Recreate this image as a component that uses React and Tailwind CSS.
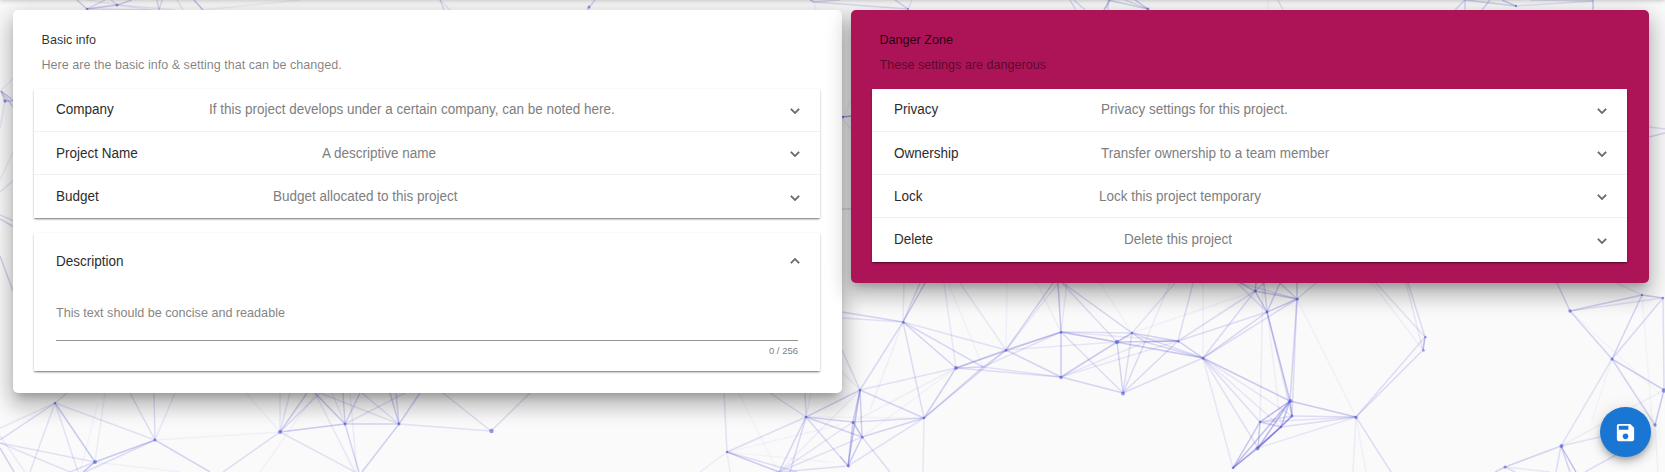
const LINES = [
  // top strip
  [77,0,87,9,.45],[87,9,117,5,.5],[87,9,105,0,.3],[117,5,132,0,.45],[117,5,111,0,.3],[87,9,155,10,.25],[117,5,175,10,.2],[157,0,159,10,.35],[162,0,159,10,.3],[177,0,183,10,.2],[194,0,203,10,.6],[203,10,300,0,.12],[87,0,150,10,.15],
  [440,0,444,10,.3],[440,0,450,10,.2],[595,0,587,10,.4],[810,0,814,2,.6],[814,2,908,9,.3],[814,2,840,0,.3],[814,2,816,10,.1],[895,0,908,9,.4],[912,0,908,9,.2],
  [1070,0,1076,10,.3],[1074,0,1085,10,.35],[1110,0,1104,10,.6],[1108,0,1108,10,.3],[1108,0,1148,9,.4],[1135,0,1148,9,.5],[1125,0,1148,9,.3],[1268,0,1268,10,.1],[1278,0,1283,10,.25],
  [1465,0,1455,10,.35],[1465,0,1465,10,.35],[1465,0,1516,6,.4],[1490,0,1482,10,.4],[1502,0,1516,6,.5],[1516,6,1593,1,.25],[1593,0,1593,10,.5],[1530,0,1593,1,.25],
  // left strip
  [1,91,14,101,.5],[5,101,14,101,.5],[1,91,5,101,.5],[1,91,14,108,.4],[0,91,14,78,.15],[5,101,0,128,.2],[0,192,14,180,.25],[14,150,0,180,.15],[0,215,14,221,.3],[0,219,14,227,.4],[0,256,13,291,.4],
  // between the panels
  [842,117,852,116,.9],[842,119,852,130,.15],[842,209,852,209,.35],[852,97,843,119,.1],
  // bottom left
  [55,403,0,428,.2],[55,403,0,440,.35],[55,403,67,393,.3],[55,403,95,462,.5],[55,403,155,440,.25],[55,403,30,472,.25],[55,403,78,472,.25],[105,393,95,462,.15],[98,403,80,472,.08],
  [95,462,155,440,.5],[155,440,85,472,.3],[95,462,83,472,.6],[95,462,70,472,.3],[95,462,0,443,.25],[0,443,70,472,.25],[0,448,14,472,.4],[95,462,180,472,.1],[0,436,25,472,.15],
  [155,440,130,393,.3],[155,440,154,393,.3],[155,440,175,393,.2],[155,440,210,472,.4],[155,440,280,432,.1],
  [280,432,223,472,.3],[280,432,345,424,.5],[280,432,307,393,.45],[280,432,280,393,.2],[280,432,290,393,.25],[280,432,320,393,.3],[280,432,355,472,.25],[280,432,246,393,.1],
  [345,424,315,393,.5],[345,424,343,393,.4],[345,424,360,393,.4],[345,424,399,424,.4],[345,424,405,393,.25],[345,424,359,472,.4],[345,424,332,393,.2],
  [399,424,420,393,.45],[399,424,390,393,.45],[399,424,362,393,.3],[399,424,396,393,.4],[399,424,362,472,.45],[399,424,320,393,.25],[399,424,491,431,.25],[315,393,355,472,.2],[357,472,350,393,.15],
  [491,431,443,393,.3],[491,431,530,393,.3],[260,472,316,393,.1],
  // bottom centre
  [727,452,724,393,.25],[727,452,806,417,.3],[727,452,779,472,.5],[727,452,797,472,.3],[727,452,700,472,.15],[727,452,730,472,.15],[727,452,830,462,.08],[727,452,840,425,.08],[778,472,739,393,.08],
  [806,417,770,393,.3],[806,417,805,393,.3],[806,417,811,393,.15],[806,417,860,390,.4],[806,417,853,422,.4],[806,417,862,437,.4],[806,417,779,472,.4],[806,417,790,472,.35],[806,417,848,466,.35],[806,417,924,418,.08],
  [860,390,842,350,.3],[860,390,853,422,.5],[860,390,848,466,.6],[860,390,862,437,.45],[860,390,924,418,.4],[860,390,903,322,.35],[860,390,956,368,.25],[860,390,779,472,.15],
  [853,422,848,466,.5],[853,422,862,437,.6],[853,422,924,418,.35],[853,422,779,472,.25],[862,437,924,418,.4],[862,437,848,466,.5],[862,437,890,472,.3],[862,437,779,472,.25],[848,466,924,418,.25],[848,466,840,456,.3],[848,466,780,472,.3],[842,372,860,390,.15],[853,422,956,368,.12],[862,437,956,368,.1],
  [924,418,956,368,.45],[924,418,983,367,.4],[924,418,1006,350,.35],[924,418,903,322,.3],[924,418,923,472,.2],
  [903,322,842,312,.4],[903,322,842,318,.25],[903,322,925,283,.5],[903,322,920,283,.35],[903,322,956,368,.4],[903,322,983,367,.35],[903,322,1006,350,.25],[903,322,904,283,.2],[903,322,870,410,.12],
  [956,368,1006,350,.4],[956,368,983,367,.4],[956,368,1061,332,.35],[956,368,1061,377,.3],[956,368,944,283,.2],[983,367,1061,332,.25],[983,367,1061,377,.25],[983,367,948,283,.1],[983,367,1006,350,.3],
  [1006,350,1061,332,.4],[1006,350,1061,377,.4],[1006,350,1053,283,.4],[1006,350,1058,283,.2],[1006,350,960,283,.2],[1006,350,1007,283,.1],[1006,350,1117,342,.2],
  [1061,332,1058,283,.55],[1061,332,1067,283,.2],[1061,332,1061,377,.5],[1061,332,1132,333,.3],[1061,332,1117,342,.4],[1061,332,1203,358,.25],[1061,332,1123,393,.3],[1061,332,1178,341,.2],
  [1061,377,1117,342,.5],[1061,377,1123,393,.4],[1061,377,1145,342,.2],[1061,377,1178,341,.2],[1061,332,1037,283,.12],
  [1117,342,1132,333,.6],[1117,342,1178,341,.5],[1117,342,1123,393,.4],[1117,342,1203,358,.3],[1117,342,1062,283,.3],[1132,333,1063,283,.4],[1132,333,1178,341,.4],[1132,333,1123,393,.3],[1132,333,1203,358,.3],[1132,333,1175,283,.25],[1132,333,1100,283,.08],
  [1145,342,1123,393,.35],[1145,342,1203,358,.35],[1145,342,1178,341,.3],[1145,342,1132,333,.4],[1145,342,1170,283,.15],[1178,341,1123,393,.35],[1178,341,1203,358,.5],[1178,341,1193,283,.3],[1178,341,1255,291,.3],[1178,341,1267,312,.3],
  [1203,358,1123,393,.3],[1203,358,1203,283,.12],[1203,358,1255,291,.35],[1203,358,1267,312,.4],[1203,358,1297,299,.3],[1203,358,1290,401,.5],[1203,358,1233,468,.2],[1203,358,1258,448,.25],[1203,358,1260,422,.3],[1203,358,1281,427,.2],[1203,358,1292,416,.2],[1132,333,1255,291,.1],
  // knot under the danger card
  [1255,291,1297,299,.5],[1255,291,1267,312,.55],[1255,291,1240,283,.5],[1255,291,1256,283,.6],[1255,291,1264,283,.4],[1267,312,1297,299,.5],[1267,312,1280,283,.45],[1267,312,1264,283,.3],[1267,312,1237,283,.3],[1297,299,1297,283,.5],[1297,299,1280,283,.4],[1297,299,1316,283,.3],[1297,299,1240,283,.3],
  [1267,312,1290,401,.6],[1267,312,1292,416,.25],[1297,299,1290,401,.4],[1297,299,1292,416,.3],[1297,299,1356,417,.1],[1263,283,1260,422,.15],[1264,283,1281,427,.12],
  [1290,401,1292,416,.7],[1290,401,1281,427,.6],[1290,401,1260,422,.65],[1290,401,1258,448,.65],[1290,401,1233,468,.6],[1290,401,1356,417,.5],[1292,416,1356,417,.3],[1281,427,1356,417,.3],[1292,416,1281,427,.6],[1292,416,1258,448,.65],[1292,416,1260,422,.3],[1281,427,1260,422,.45],[1281,427,1258,448,.7],[1260,422,1258,448,.5],[1260,422,1233,468,.5],[1258,448,1233,468,.7],[1258,448,1356,417,.2],[1281,427,1233,468,.5],[1260,422,1356,417,.25],
  [1356,417,1425,337,.3],[1356,417,1423,350,.35],[1356,417,1391,472,.3],[1356,417,1353,472,.15],[1356,417,1366,472,.1],[1425,337,1423,350,.7],[1425,337,1408,283,.3],[1425,337,1376,283,.25],[1423,350,1406,283,.2],[1423,350,1372,283,.12],
  // right side
  [1570,311,1557,283,.4],[1570,311,1642,295,.45],[1570,311,1663,298,.25],[1570,311,1612,359,.4],[1642,295,1663,298,.5],[1642,295,1612,359,.4],[1642,295,1617,283,.2],[1663,298,1612,359,.35],[1663,298,1664,390,.3],[1642,295,1652,420,.08],[1570,311,1664,398,.08],
  [1612,359,1664,390,.45],[1612,359,1655,425,.4],[1612,359,1561,446,.25],[1612,359,1592,420,.08],[1664,390,1655,425,.5],[1664,390,1561,446,.12],[1655,425,1658,472,.12],[1561,446,1600,437,.25],[1561,446,1505,467,.4],[1561,446,1556,472,.3],[1561,446,1576,472,.6],[1561,446,1570,472,.4],[1505,467,1495,472,.4],[1505,467,1515,472,.3],[1505,467,1550,472,.2],[1585,472,1625,450,.3],
  [1649,127,1665,129,.3],[1649,137,1665,133,.4],
];
const NODES = [
  [117,5,1.5],[87,9,1.2],[589,7,1.5],[908,9,1],[1148,9,1.5],[1516,6,1.2],[5,101,1.7],[843,117,1.2],
  [55,403,1.2],[95,462,2],[155,440,1.5],[280,432,2],[345,424,1.5],[399,424,1.5],[491.5,431,2.2],
  [727,452,1.2],[806,417,1.3],[860,390,1.3],[853,422.5,1.5],[862.5,437.5,1.3],[848.5,466,1.5],[924,418,1.3],[903.5,322.5,1.3],
  [956,368,2],[1006,350.5,1.3],[1061,332.5,1.3],[1061,377.5,1.7],[1117,342,2.2],[1132,333,1.2],[1178.5,341.5,1.2],[1203,358.5,1.3],[1123,393.5,2],
  [1255.5,291,1.5],[1267,312,1.5],[1297.5,299,1.5],[1290.5,401,2],[1292,416,1.5],[1281,427,1.2],[1260,422,1.2],[1257.5,448.5,2],[1233,468,1.3],[1356,417.5,1.7],
  [1425.5,337,1.2],[1423.5,350.5,1.2],[1570,311,1.7],[1642,295,1.2],[1663,298,1.2],[1612,359,1.5],[1664,390.5,2.2],[1655,425,1.7],[1561.5,446,2],[1505,467,1.5],
];

function Network() {
  return (
    <svg className="absolute inset-0" width="1665" height="472" viewBox="0 0 1665 472" aria-hidden="true">
      {LINES.map(([x1, y1, x2, y2, o], i) => (
        <line key={i} x1={x1} y1={y1} x2={x2} y2={y2} stroke="#4844d2" strokeOpacity={o * 0.53} strokeWidth="1.5" />
      ))}
      {NODES.map(([x, y, r], i) => (
        <circle key={i} cx={x} cy={y} r={r} fill="#4f5bd5" fillOpacity=".6" />
      ))}
    </svg>
  );
}

function Chevron({ up }) {
  return (
    <svg className={up ? "rotate-180" : ""} width="18" height="18" viewBox="0 0 24 24" fill="#6c6c6c" stroke="#6c6c6c" strokeWidth=".7">
      <path d="M16.59 8.59 12 13.17 7.41 8.59 6 10l6 6 6-6z" />
    </svg>
  );
}

function Row({ name, note, pad, first, h, text }) {
  return (
    <div className={`flex ${h} items-center pl-[22px] pr-[16px] ${first ? "" : "border-t border-[#f1f1f1]"}`}>
      <div className={`flex flex-1 whitespace-nowrap text-[13.5px] leading-5 ${text}`}>
        <span className="origin-bottom scale-y-[1.08] text-[#2c2c2c]">{name}</span>
      </div>
      <div className={`${pad} ${text} shrink-0 whitespace-nowrap text-[13.5px] leading-5 text-[#7e7e7e]`}>
        <span className="inline-block origin-bottom scale-y-[1.08]">{note}</span>
      </div>
      <div className="pt-[2px]"><Chevron /></div>
    </div>
  );
}

const PANEL = "bg-white shadow-[0_2px_2px_-1px_rgba(0,0,0,0.3),0_1px_1px_0_rgba(0,0,0,0.17),0_1px_3px_0_rgba(0,0,0,0.14)]";
const CARD = "rounded-[5px] shadow-[0_7px_9px_-4px_rgba(0,0,0,0.2),0_13px_20px_2px_rgba(0,0,0,0.16),0_5px_25px_4px_rgba(0,0,0,0.14)]";

function Heading({ title, sub }) {
  return (
    <div className="h-[79px] pl-[28.5px] pt-[20px] text-[12.6px]">
      <div className="mb-[5px] h-[20px] origin-bottom scale-y-[1.08] leading-[20px] text-black/82">{title}</div>
      <div className="h-[20px] origin-bottom scale-y-[1.08] leading-[20px] text-black/50">{sub}</div>
    </div>
  );
}

export default function App() {
  return (
    <div className="relative h-[472px] w-[1665px] overflow-hidden bg-[#fafafa] font-['Liberation_Sans',Arial,sans-serif]">
      <Network />
      <div className="relative flex items-start gap-[9px] pl-[13px] pt-[10px]">
        <section className={`${CARD} h-[383px] w-[829px] bg-white`}>
          <Heading title="Basic info" sub="Here are the basic info & setting that can be changed." />
          <div className={`${PANEL} ml-[21px] w-[786px]`}>
            <Row first h="h-[42px]" text="pt-0" name="Company" note="If this project develops under a certain company, can be noted here." pad="w-[577px]" />
            <Row h="h-[43px]" text="pt-[2px]" name="Project Name" note="A descriptive name" pad="w-[464px]" />
            <Row h="h-[44px]" text="pt-0" name="Budget" note="Budget allocated to this project" pad="w-[513px]" />
          </div>
          <div className={`${PANEL} ml-[21px] mt-[15px] h-[138px] w-[786px] px-[22px] pt-[17px]`}>
            <div className="-mr-[6px] flex h-[22px] items-center justify-between">
              <span className="origin-bottom scale-y-[1.08] pt-[3px] text-[13.5px] leading-[22px] text-[#2c2c2c]">Description</span>
              <Chevron up />
            </div>
            <div className="mt-[29px] h-[40px] border-b border-[#949494] text-[12.6px] leading-[24px] text-[#858585]">
              <span className="inline-block origin-center scale-y-[1.08]">This text should be concise and readable</span>
            </div>
            <div className="mt-[3px] text-right text-[9.5px] leading-[14px] text-[#7e7e7e]">0 / 256</div>
          </div>
        </section>
        <section className={`${CARD} h-[273px] w-[798px] bg-[#ad1457]`}>
          <Heading title="Danger Zone" sub="These settings are dangerous" />
          <div className={`${PANEL} ml-[21px] w-[755px]`}>
            <Row first h="h-[42px]" text="pt-0" name="Privacy" note="Privacy settings for this project." pad="w-[492px]" />
            <Row h="h-[43px]" text="pt-[2px]" name="Ownership" note="Transfer ownership to a team member" pad="w-[492px]" />
            <Row h="h-[43px]" text="pt-[2px]" name="Lock" note="Lock this project temporary" pad="w-[494px]" />
            <Row h="h-[45px]" text="pt-0" name="Delete" note="Delete this project" pad="w-[469px]" />
          </div>
        </section>
      </div>
      <div className="absolute inset-x-0 -top-[10px] h-[10px] shadow-[0_0_5px_rgba(0,0,0,0.28)]" />
      <button className="absolute left-[1600px] top-[407px] flex h-[50px] w-[51px] items-center justify-center rounded-full bg-[#1976d2] shadow-[0_3px_5px_-1px_rgba(0,0,0,0.2),0_6px_9px_0_rgba(0,0,0,0.14),0_1px_16px_0_rgba(0,0,0,0.12)]" aria-label="Save">
        <svg width="23" height="23" viewBox="0 0 24 24" fill="#fff">
          <path d="M17 3H5c-1.11 0-2 .9-2 2v14c0 1.1.89 2 2 2h14c1.1 0 2-.9 2-2V7l-4-4zm-5 16c-1.66 0-3-1.34-3-3s1.34-3 3-3 3 1.34 3 3-1.34 3-3 3zm3-10H5V5h10v4z" />
        </svg>
      </button>
    </div>
  );
}
